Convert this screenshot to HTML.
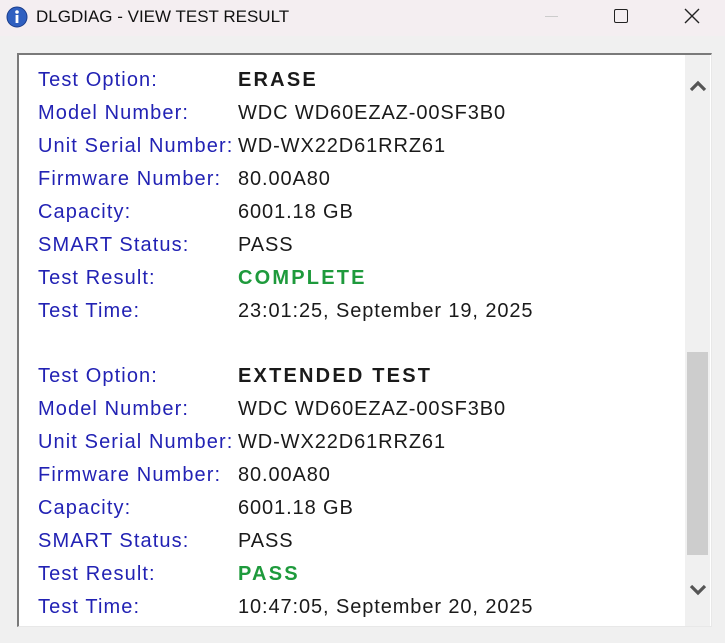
<!DOCTYPE html>
<html><head><meta charset="utf-8"><style>
*{margin:0;padding:0;box-sizing:border-box}
body{width:725px;height:643px;background:#f0f0f0;font-family:"Liberation Sans",sans-serif;position:relative;overflow:hidden}
.title{position:absolute;left:0;top:0;width:725px;height:36px;background:#f4eef1}
.title .t{position:absolute;left:36px;top:7px;font-size:17px;color:#111}
.box{position:absolute;left:17px;top:53px;width:695px;height:574px;background:#fff;border-top:2px solid #7a7a7a;border-left:2px solid #7a7a7a;border-right:1px solid #e8e8e8;border-bottom:1px solid #e8e8e8}
.sb{position:absolute;left:685px;top:55px;width:25px;height:571px;background:#f0f0f0}
.thumb{position:absolute;left:2px;top:297px;width:21px;height:203px;background:#cdcdcd}
.r{position:absolute;font-size:20px;white-space:nowrap}
.l{left:38px;color:#2222b4;letter-spacing:1.1px}
.v{left:238px;color:#1a1a1a;letter-spacing:0.9px}
.b{font-weight:bold;letter-spacing:2.2px}
.g{color:#1e9a3c}
</style></head><body>
<div class="title">
<svg style="position:absolute;left:6px;top:6px" width="22" height="22" viewBox="0 0 22 22"><circle cx="11" cy="11" r="10" fill="#2f5fc0" stroke="#1b3d8c"/><circle cx="11" cy="6" r="1.8" fill="#fff"/><rect x="9.6" y="9" width="2.8" height="8" fill="#fff"/></svg>
<div class="t">DLGDIAG - VIEW TEST RESULT</div>
<div style="position:absolute;left:545px;top:16px;width:13px;height:1px;background:#ccc"></div>
<div style="position:absolute;left:614px;top:9px;width:14px;height:14px;border:1.5px solid #222;border-radius:2px"></div>
<svg style="position:absolute;left:684px;top:8px" width="16" height="16" viewBox="0 0 16 16"><path d="M1 1L15 15M15 1L1 15" stroke="#222" stroke-width="1.4"/></svg>
</div>
<div class="box"></div>
<div class="sb"><div class="thumb"></div>
<svg style="position:absolute;left:4px;top:25px" width="18" height="13" viewBox="0 0 18 13"><path d="M2 10L9 3L16 10" stroke="#555" stroke-width="3.2" fill="none"/></svg>
<svg style="position:absolute;left:4px;top:528px" width="18" height="13" viewBox="0 0 18 13"><path d="M2 3L9 10L16 3" stroke="#555" stroke-width="3.2" fill="none"/></svg>
</div>
<div class="r l" style="top:69px">Test Option:</div><div class="r v b" style="top:69px">ERASE</div>
<div class="r l" style="top:102px">Model Number:</div><div class="r v" style="top:102px">WDC WD60EZAZ-00SF3B0</div>
<div class="r l" style="top:135px">Unit Serial Number:</div><div class="r v" style="top:135px">WD-WX22D61RRZ61</div>
<div class="r l" style="top:168px">Firmware Number:</div><div class="r v" style="top:168px">80.00A80</div>
<div class="r l" style="top:201px">Capacity:</div><div class="r v" style="top:201px">6001.18 GB</div>
<div class="r l" style="top:234px">SMART Status:</div><div class="r v" style="top:234px">PASS</div>
<div class="r l" style="top:267px">Test Result:</div><div class="r v b g" style="top:267px">COMPLETE</div>
<div class="r l" style="top:300px">Test Time:</div><div class="r v" style="top:300px">23:01:25, September 19, 2025</div>
<div class="r l" style="top:365px">Test Option:</div><div class="r v b" style="top:365px">EXTENDED TEST</div>
<div class="r l" style="top:398px">Model Number:</div><div class="r v" style="top:398px">WDC WD60EZAZ-00SF3B0</div>
<div class="r l" style="top:431px">Unit Serial Number:</div><div class="r v" style="top:431px">WD-WX22D61RRZ61</div>
<div class="r l" style="top:464px">Firmware Number:</div><div class="r v" style="top:464px">80.00A80</div>
<div class="r l" style="top:497px">Capacity:</div><div class="r v" style="top:497px">6001.18 GB</div>
<div class="r l" style="top:530px">SMART Status:</div><div class="r v" style="top:530px">PASS</div>
<div class="r l" style="top:563px">Test Result:</div><div class="r v b g" style="top:563px">PASS</div>
<div class="r l" style="top:596px">Test Time:</div><div class="r v" style="top:596px">10:47:05, September 20, 2025</div>
</body></html>
